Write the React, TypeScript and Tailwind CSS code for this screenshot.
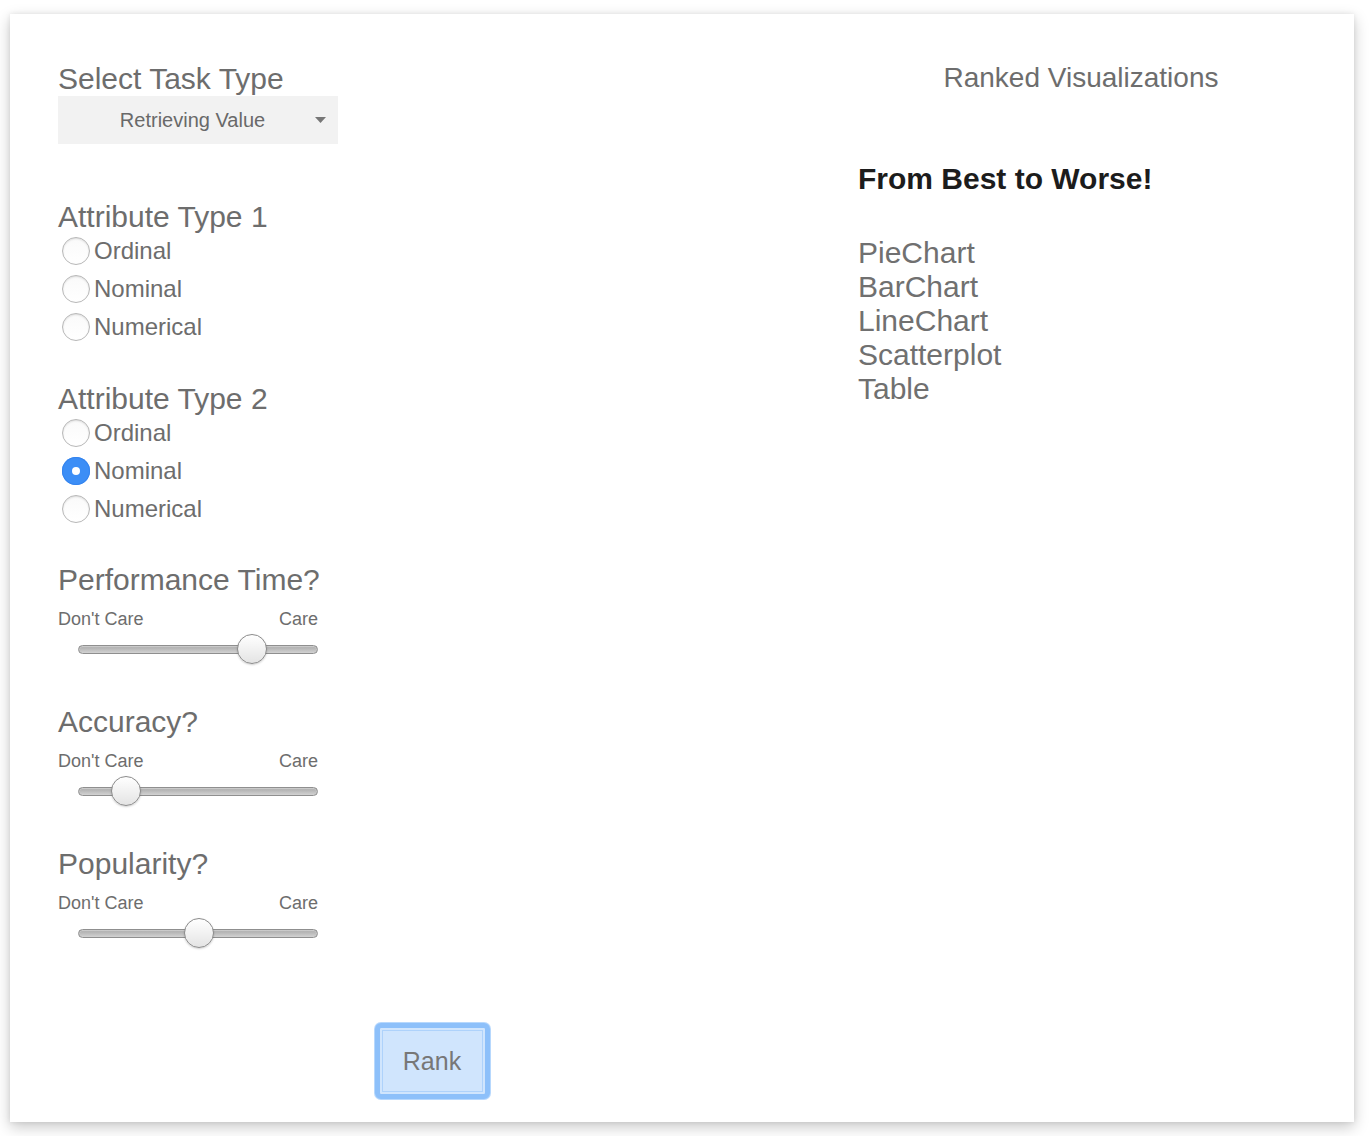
import React, { useState } from "react";

interface SliderField {
  label: string;
  value: number;
}

const attributeOptions = ["Ordinal", "Nominal", "Numerical"];

const rankedList = ["PieChart", "BarChart", "LineChart", "Scatterplot", "Table"];

const Radio: React.FC<{ label: string; checked: boolean; onSelect: () => void }> = ({
  label,
  checked,
  onSelect,
}) => (
  <div className="flex h-[38px] cursor-pointer items-center" onClick={onSelect}>
    {checked ? (
      <span className="ml-[4px] flex h-[28px] w-[28px] items-center justify-center rounded-full bg-[#3c8ef6] shadow-[inset_0_0_0_1px_#3584ee]">
        <span className="h-[8px] w-[8px] rounded-full bg-white" />
      </span>
    ) : (
      <span className="ml-[4px] h-[28px] w-[28px] rounded-full border border-[#b8b8b8] bg-linear-to-b from-[#fafafa] to-white shadow-[inset_0_1px_2px_rgba(0,0,0,0.12)]" />
    )}
    <span className="ml-[4px] text-[24px] leading-[38px] text-[#6d6d6d]">{label}</span>
  </div>
);

const RadioGroup: React.FC<{ title: string; value: string; onChange: (v: string) => void }> = ({
  title,
  value,
  onChange,
}) => (
  <div className="mt-[37px]">
    <h3 className="text-[30px] leading-[31px] text-[#6d6d6d]">{title}</h3>
    {attributeOptions.map((opt) => (
      <Radio key={opt} label={opt} checked={value === opt} onSelect={() => onChange(opt)} />
    ))}
  </div>
);

const Slider: React.FC<{ field: SliderField }> = ({ field }) => (
  <div className="mt-[37px]">
    <h3 className="text-[30px] leading-[31px] text-[#6d6d6d]">{field.label}</h3>
    <div className="mt-[14px] flex w-[260px] justify-between text-[18px] leading-[20px] text-[#6d6d6d]">
      <span>Don't Care</span>
      <span>Care</span>
    </div>
    <div className="flex h-[40px] items-center">
      <div className="relative ml-[20px] h-[9px] w-[240px] rounded-full border border-[#8f8f8f] bg-linear-to-b from-[#a9a9a9] to-[#d2d2d2] shadow-[inset_0_1px_1px_rgba(255,255,255,0.4)]">
        {/* thumb position comes from the value */}
        <span
          className="absolute top-[-12px] h-[30px] w-[30px] rounded-full border border-[#8c8c8c] bg-linear-to-b from-white to-[#e4e4e4] shadow-[0_1px_2px_rgba(0,0,0,0.18)]"
          style={{ left: `${field.value * 210}px` }}
        />
      </div>
    </div>
  </div>
);

const App: React.FC = () => {
  const [attr1, setAttr1] = useState<string>("");
  const [attr2, setAttr2] = useState<string>("Nominal");

  const sliders: SliderField[] = [
    { label: "Performance Time?", value: 0.75 },
    { label: "Accuracy?", value: 0.15 },
    { label: "Popularity?", value: 0.5 },
  ];

  return (
    <div className="h-[1136px] w-full bg-white pl-[10px] pt-[14px] font-['Liberation_Sans',Arial,sans-serif]">
      <div className="flex h-[1108px] w-[1344px] bg-white shadow-[0_5px_14px_rgba(0,0,0,0.22),0_0_5px_rgba(0,0,0,0.08)]">
        {/* Left: inputs */}
        <div className="ml-[48px] flex w-[748px] flex-col">
          <h2 className="mt-[48px] text-[30px] leading-[34px] text-[#6d6d6d]">Select Task Type</h2>
          <div className="flex h-[48px] w-[280px] items-center bg-[#f2f2f2]">
            <span className="flex-1 pl-[12px] text-center text-[20px] text-[#696969]">Retrieving Value</span>
            <svg width="11" height="6" viewBox="0 0 11 6" className="mr-[12px]">
              <polygon points="0,0 11,0 5.5,6" fill="#777" />
            </svg>
          </div>

          <div className="mt-[20px]">
            <RadioGroup title="Attribute Type 1" value={attr1} onChange={setAttr1} />
          </div>
          <RadioGroup title="Attribute Type 2" value={attr2} onChange={setAttr2} />

          <div className="-mt-[1px]">
            {sliders.map((s) => (
              <Slider key={s.label} field={s} />
            ))}
          </div>

          <div className="mt-[69px] self-center rounded-[7px] bg-[#b7d8fd] p-[1px]">
            <button className="h-[76px] w-[115px] rounded-[6px] border-[5px] border-[#8dc0fa] bg-[#d0e5fd] pt-[2px] text-[25px] text-[#777] shadow-[inset_0_0_0_2px_#d0e5fd,inset_0_0_0_3px_#aed2fb]">
              Rank
            </button>
          </div>
        </div>

        {/* Right: results */}
        <div className="ml-[52px] w-[446px]">
          <h2 className="mt-[48px] text-center text-[28px] leading-[32px] text-[#6d6d6d]">Ranked Visualizations</h2>
          <h3 className="mt-[68px] text-[30px] font-bold leading-[34px] text-[#1c1c1c]">From Best to Worse!</h3>
          <ul className="mt-[40px]">
            {rankedList.map((item) => (
              <li key={item} className="text-[30px] leading-[34px] text-[#707070]">
                {item}
              </li>
            ))}
          </ul>
        </div>
      </div>
    </div>
  );
};

export default App;
